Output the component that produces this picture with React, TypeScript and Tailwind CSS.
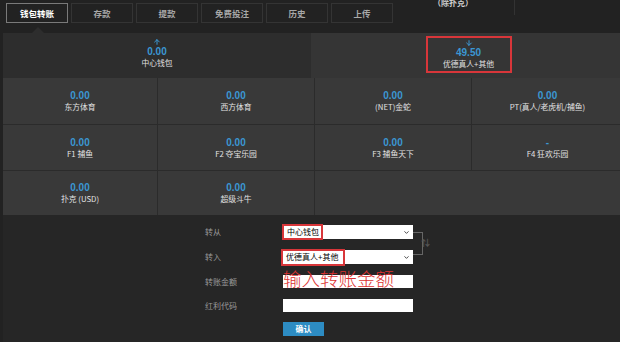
import React from "react";
import { ArrowUp, ArrowDown, ChevronDown } from "lucide-react";

const cjk = "font-['Noto_Sans_CJK_SC',sans-serif]";
const num = "font-['Liberation_Sans',Arial,sans-serif]";

function Tab({ label, active }: { label: string; active?: boolean }) {
  return (
    <div
      className={`w-[62px] h-[20px] flex items-center justify-center border ${
        active ? "border-[#7a7a7a] text-white" : "border-[#343434] text-[#a8a8a8]"
      } ${cjk} text-[8.5px] font-bold leading-none`}
    >
      {label}
    </div>
  );
}

function Cell({ value, label, className = "" }: { value: string; label: string; className?: string }) {
  return (
    <div className={`flex flex-col items-center justify-center bg-[#393939] ${className}`}>
      <div className={`${num} font-bold text-[10px] leading-[11px] text-[#3b97d3]`}>{value}</div>
      <div className={`${cjk} text-[7.8px] leading-[11px] text-[#e2e2e2] whitespace-nowrap`}>{label}</div>
    </div>
  );
}

export default function App() {
  return (
    <div className={`w-[620px] h-[342px] bg-[#222222] overflow-hidden flex flex-col ${cjk}`}>
      {/* Tab bar */}
      <div className="h-[33px] flex items-start pl-[6px] relative shrink-0">
        <div className="flex gap-[3px] pt-[3px]">
          <Tab label="钱包转账" active />
          <Tab label="存款" />
          <Tab label="提款" />
          <Tab label="免费投注" />
          <Tab label="历史" />
          <Tab label="上传" />
        </div>
        <div className="ml-[40px] -mt-[3px] text-[8px] leading-[12px] text-[#cfcfcf] font-bold">（除扑克）</div>
        <div className="ml-[41px] w-px h-[15px] bg-[#333333]" />
        {/* pointer under active tab */}
        <div className="absolute left-[32px] bottom-0 w-0 h-0 border-l-[6px] border-r-[6px] border-b-[6px] border-l-transparent border-r-transparent border-b-[#2d2d2d]" />
      </div>

      {/* Main panel */}
      <div className="ml-[3px] flex flex-col flex-1">
        {/* Top wallets */}
        <div className="flex h-[45px] shrink-0">
          <div className="w-[308px] bg-[#2d2d2d] flex flex-col items-center pt-[5px]">
            <ArrowUp size={8} strokeWidth={3} color="#3b97d3" />
            <div className={`${num} font-bold text-[10px] leading-[11px] text-[#3b97d3]`}>0.00</div>
            <div className="text-[7.8px] leading-[11px] text-[#e0e0e0]">中心钱包</div>
          </div>
          <div className="flex-1 bg-[#353535] flex justify-center pt-[3px] pl-[6px]">
            <div className="w-[86px] h-[37px] border-2 border-[#d8363a] flex flex-col items-center pt-[1px]">
              <ArrowDown size={8} strokeWidth={3} color="#3b97d3" />
              <div className={`${num} font-bold text-[10px] leading-[11px] text-[#3b97d3]`}>49.50</div>
              <div className="text-[7.8px] leading-[11px] text-[#e0e0e0] whitespace-nowrap">优德真人+其他</div>
            </div>
          </div>
        </div>

        {/* Grid */}
        <div className="grid grid-cols-[154px_156px_156px_151px] grid-rows-[46px_45px_44px] gap-px bg-[#2b2b2b] shrink-0">
          <Cell value="0.00" label="东方体育" />
          <Cell value="0.00" label="西方体育" />
          <Cell value="0.00" label="(NET)金蛇" />
          <Cell value="0.00" label="PT(真人/老虎机/捕鱼)" />
          <Cell value="0.00" label="F1 捕鱼" />
          <Cell value="0.00" label="F2 夺宝乐园" />
          <Cell value="0.00" label="F3 捕鱼天下" />
          <Cell value="-" label="F4 狂欢乐园" />
          <Cell value="0.00" label="扑克 (USD)" />
          <Cell value="0.00" label="超级斗牛" />
          <div className="col-span-2 bg-[#393939]" />
        </div>

        {/* Form */}
        <div className="flex-1 bg-[#262626] pl-[202px] pt-[10px]">
          <div className="relative">
            <div className="flex items-center h-[14px]">
              <div className="w-[78px] text-[8px] text-[#9a9a9a]">转从</div>
              <div className="relative w-[130px] h-[14px] bg-white flex items-center justify-between pl-[4px] pr-[3px]">
                <span className="text-[8px] text-black leading-none">中心钱包</span>
                <ChevronDown size={7} strokeWidth={3} color="#333" />
                <div className="absolute -left-[1px] -top-[1px] w-[41px] h-[16px] border-2 border-[#d8363a]" />
              </div>
            </div>
            <div className="flex items-center h-[14px] mt-[11px]">
              <div className="w-[78px] text-[8px] text-[#9a9a9a]">转入</div>
              <div className="relative w-[130px] h-[14px] bg-white flex items-center justify-between pl-[3px] pr-[3px]">
                <span className="text-[8px] text-black leading-none">优德真人+其他</span>
                <ChevronDown size={7} strokeWidth={3} color="#333" />
                <div className="absolute -left-[2px] -top-[1px] w-[64px] h-[17px] border-2 border-[#d8363a]" />
              </div>
            </div>
            {/* swap bracket */}
            <div className="absolute left-[208px] top-[7px] w-[10px] h-[23px] border-t border-r border-b border-[#666]" />
            <div className="absolute left-[216px] top-[11px] text-[9px] leading-[14px] text-[#555] font-bold">⇅</div>
          </div>
          <div className="flex items-center h-[13px] mt-[11px]">
            <div className="w-[78px] text-[8px] text-[#9a9a9a]">转账金额</div>
            <div className="relative w-[130px] h-[13px] bg-white">
              <div className="absolute left-0 -top-[8px] text-[18.5px] leading-[22px] text-[#dc3230] font-light whitespace-nowrap">
                输入转账金额
              </div>
            </div>
          </div>
          <div className="flex items-center h-[13px] mt-[11px]">
            <div className="w-[78px] text-[8px] text-[#9a9a9a]">红利代码</div>
            <div className="w-[130px] h-[13px] bg-white" />
          </div>
          <div className="ml-[78px] mt-[10px] w-[41px] h-[14px] bg-[#2d8cc3] flex items-center justify-center text-[8px] font-bold text-white leading-none">
            确认
          </div>
        </div>
      </div>
    </div>
  );
}
